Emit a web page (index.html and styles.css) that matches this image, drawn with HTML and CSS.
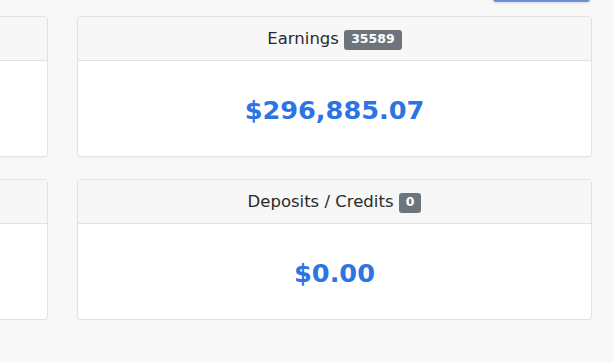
FILE: index.html
```html
<!DOCTYPE html>
<html lang="en">
<head>
    <meta charset="UTF-8">
    <meta name="viewport" content="width=device-width, initial-scale=1.0">
    <title>Account Summary</title>
    <link rel="stylesheet" href="styles.css">
</head>
<body>
    <div class="topbar">
        <button class="btn-export" type="button">Export</button>
    </div>

    <div class="summary">
        <div class="card">
            <div class="card-header">Payouts <span class="badge">0</span></div>
            <div class="card-body"><span class="amount">$0.00</span></div>
        </div>
        <div class="card">
            <div class="card-header">Earnings <span class="badge">35589</span></div>
            <div class="card-body"><span class="amount">$296,885.07</span></div>
        </div>
        <div class="card">
            <div class="card-header">Withdrawals <span class="badge">0</span></div>
            <div class="card-body"><span class="amount">$0.00</span></div>
        </div>
        <div class="card">
            <div class="card-header">Deposits / Credits <span class="badge">0</span></div>
            <div class="card-body"><span class="amount">$0.00</span></div>
        </div>
    </div>
</body>
</html>
```

FILE: styles.css
```css
body {
    font-family: "DejaVu Sans", Verdana, sans-serif;
    background-color: #f8f8f8;
    color: #2a2a2a;
    margin: 0;
    overflow: hidden;
}
.topbar {
    display: flex;
    justify-content: flex-end;
    align-items: flex-end;
    height: 2px;
    padding-right: 23px;
}
.btn-export {
    flex: none;
    width: 97px;
    height: 36px;
    background-color: #fff;
    color: #2b74e2;
    border: none;
    border-bottom: 2px solid #6b8fd8;
    border-radius: 3px;
    box-shadow: 0 1px 3px rgba(0, 0, 0, 0.12);
}
.summary {
    display: grid;
    grid-template-columns: 515px 515px;
    column-gap: 29px;
    row-gap: 22px;
    margin-top: 14px;
    margin-left: -467px;
}
.card {
    background-color: #fff;
    border: 1px solid #e2e2e2;
    border-radius: 4px;
    box-shadow: 0 1px 2px rgba(0, 0, 0, 0.04);
    overflow: hidden;
}
.card-header {
    height: 25px;
    background-color: #f7f7f7;
    border-bottom: 1px solid #e2e2e2;
    font-size: 16.5px;
    line-height: 25px;
    padding: 9px 0;
    text-align: center;
}
.badge {
    display: inline-block;
    background-color: #6c757d;
    color: #fff;
    font-size: 12.5px;
    font-weight: bold;
    line-height: 1;
    padding: 3px 7px 4px;
    border-radius: 3px;
    vertical-align: 1px;
}
.card-body {
    height: 95px;
    display: flex;
    align-items: center;
    justify-content: center;
}
.amount {
    color: #2b74e2;
    font-size: 25.6px;
    font-weight: bold;
    padding-top: 2px;
}
```
